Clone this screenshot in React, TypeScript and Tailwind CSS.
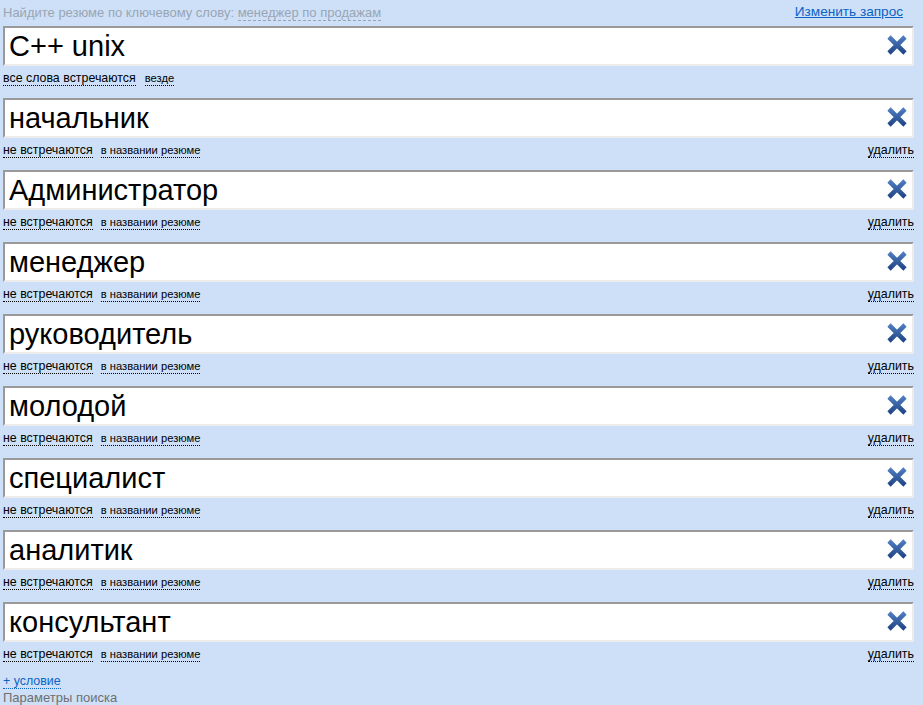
const terms = [
  'начальник',
  'Администратор',
  'менеджер',
  'руководитель',
  'молодой',
  'специалист',
  'аналитик',
  'консультант',
];

const ClearIcon = () => (
  <svg width="20" height="20" viewBox="0 0 20 20">
    <defs>
      <linearGradient id="xg" x1="0" y1="0" x2="0" y2="1">
        <stop offset="0" stopColor="#4d7cc0" />
        <stop offset="1" stopColor="#1f4686" />
      </linearGradient>
    </defs>
    <path d="M2 2 L18 18 M18 2 L2 18" stroke="url(#xg)" strokeWidth="4.6" strokeLinecap="butt" fill="none" />
  </svg>
);

const Term = ({ value }: { value: string }) => (
  <div className="relative h-[40px] border-2 border-t-[#9a9a9a] border-l-[#9a9a9a] border-r-[#ececec] border-b-[#ececec] bg-white">
    <input
      defaultValue={value}
      className="h-full w-full bg-transparent pl-[4px] pr-[40px] text-[29px] leading-none text-black outline-none"
    />
    <button className="absolute right-[5px] top-[7px] flex h-[20px] w-[20px] items-center justify-center">
      <ClearIcon />
    </button>
  </div>
);

const Dotted = ({ children, small }: { children: React.ReactNode; small?: boolean }) => (
  <span className={`border-b border-dotted border-black leading-[14px] text-black ${small ? 'text-[11.2px]' : 'text-[12.4px]'}`}>
    {children}
  </span>
);

export default function App() {
  return (
    <div className="h-[705px] w-[923px] overflow-hidden bg-[#cde0f7] pl-[3px] pr-[9px]" style={{ fontFamily: '"Liberation Sans", Arial, sans-serif' }}>
      <div className="flex h-[26px] items-center justify-between pr-[11px] pb-[1px]">
        <div className="text-[13px] text-[#9aa5b3]">
          Найдите резюме по ключевому слову:{' '}
          <span className="border-b border-dashed border-[#9aa5b3]">менеджер по продажам</span>
        </div>
        <a href="#" className="text-[13.6px] text-[#0b63c5] underline">Изменить запрос</a>
      </div>

      <Term value="C++ unix" />
      <div className="flex h-[32px] items-start gap-[9px] pt-[5px]">
        <Dotted>все слова встречаются</Dotted>
        <Dotted small>везде</Dotted>
      </div>

      {terms.map((t) => (
        <div key={t}>
          <Term value={t} />
          <div className="flex h-[32px] items-start justify-between pt-[5px]">
            <div className="flex gap-[8px]">
              <Dotted>не встречаются</Dotted>
              <Dotted small>в названии резюме</Dotted>
            </div>
            <Dotted>удалить</Dotted>
          </div>
        </div>
      ))}

      <div className="flex flex-col items-start">
        <a href="#" className="border-b border-dotted border-[#0b63c5] text-[12.4px] leading-[14px] text-[#0b63c5]">+ условие</a>
        <div className="mt-[2px] text-[13px] leading-[14px] text-[#6f6f6f]">Параметры поиска</div>
      </div>
    </div>
  );
}
